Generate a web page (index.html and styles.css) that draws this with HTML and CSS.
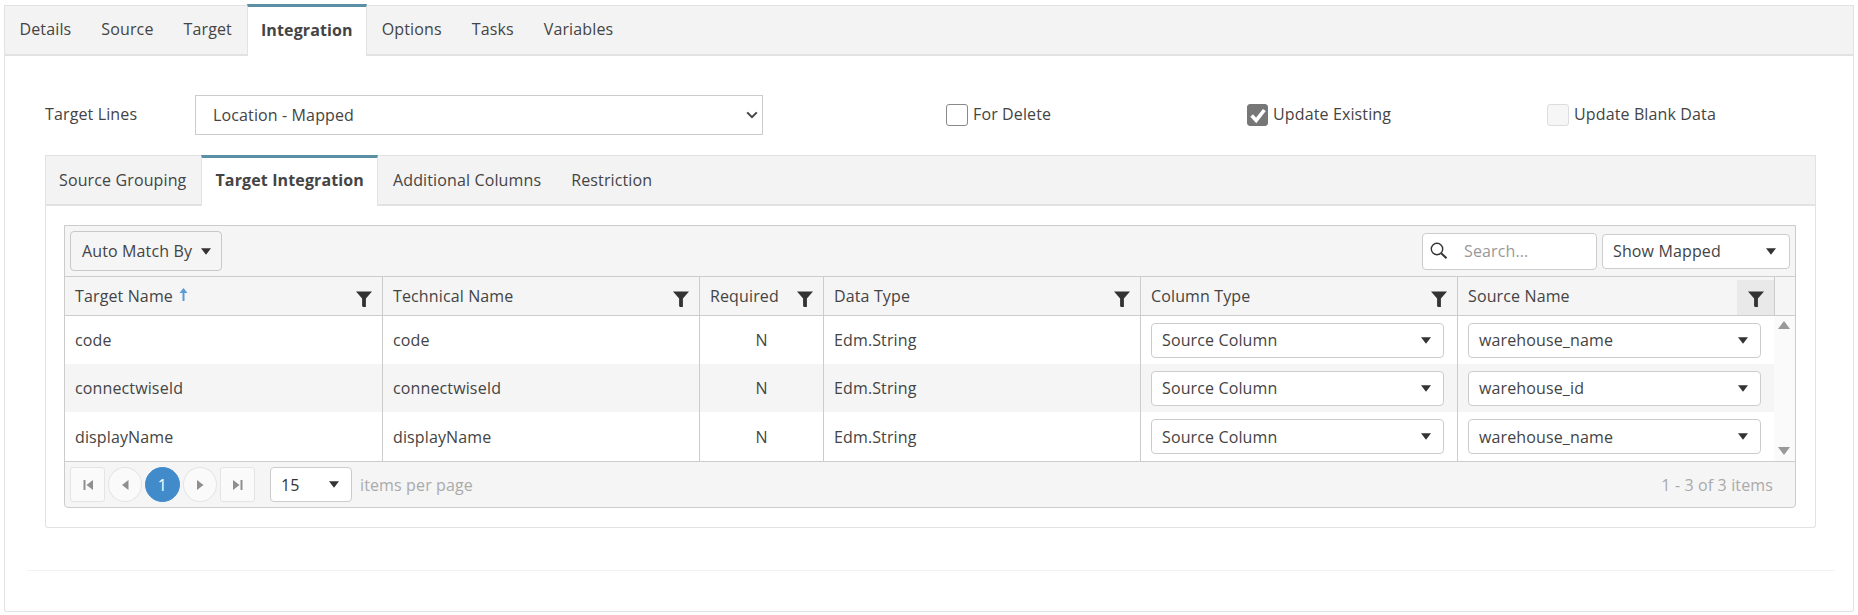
FILE: index.html
```html
<!DOCTYPE html>
<html lang="en">
<head>
<meta charset="utf-8">
<title>Integration</title>
<link rel="stylesheet" href="styles.css">
</head>
<body>
<svg class="defs" width="0" height="0">
  <symbol id="funnel" viewBox="0 0 16 16"><path d="M0 0.5h16L9.9 7.6V16H6.9L6.1 15V7.6z"/></symbol>
  <symbol id="caret" viewBox="0 0 12 8"><path d="M0 0h12L6 8z"/></symbol>
</svg>
<main class="panel">
  <nav class="tabs main-tabs">
    <a>Details</a><a>Source</a><a>Target</a><a class="active">Integration</a><a>Options</a><a>Tasks</a><a>Variables</a>
  </nav>
  <section class="body">
    <div class="form-row">
      <label class="field-label">Target Lines</label>
      <div class="native-select">
        <span>Location - Mapped</span>
        <svg class="chevron" viewBox="0 0 12 8"><path d="M1.2 1.4L6 6.2l4.8-4.8" fill="none" stroke="#444" stroke-width="2"/></svg>
      </div>
      <div class="checks">
        <label class="check check-a"><i class="box"></i>For Delete</label>
        <label class="check check-b"><i class="box on"><svg viewBox="0 0 22 22"><path d="M4 11.5l5 5.5L18 5.5" fill="none" stroke="#fff" stroke-width="4"/></svg></i>Update Existing</label>
        <label class="check check-c"><i class="box off"></i>Update Blank Data</label>
      </div>
    </div>
    <div class="inner">
      <nav class="tabs inner-tabs">
        <a>Source Grouping</a><a class="active">Target Integration</a><a>Additional Columns</a><a>Restriction</a>
      </nav>
      <div class="inner-body">
        <div class="grid">
          <div class="toolbar">
            <button class="btn">Auto Match By <svg class="caret"><use href="#caret"/></svg></button>
            <div class="tool-right">
              <div class="search">
                <svg viewBox="0 0 20 20" class="mag"><circle cx="8" cy="8" r="5.7" fill="none" stroke="#333" stroke-width="1.4"/><path d="M12.2 12.2l5.3 5.1" stroke="#333" stroke-width="2"/></svg>
                <span>Search...</span>
              </div>
              <div class="dd dd-show"><span>Show Mapped</span><svg class="caret"><use href="#caret"/></svg></div>
            </div>
          </div>
          <div class="table">
            <div class="head">
              <div class="th"><span class="th-label">Target Name<svg class="sort" viewBox="0 0 9 13"><path d="M4.5 0L8.5 5H5.5V13H3.5V5H0.5z"/></svg></span><svg class="funnel"><use href="#funnel"/></svg></div>
              <div class="th"><span>Technical Name</span><svg class="funnel"><use href="#funnel"/></svg></div>
              <div class="th"><span>Required</span><svg class="funnel"><use href="#funnel"/></svg></div>
              <div class="th"><span>Data Type</span><svg class="funnel"><use href="#funnel"/></svg></div>
              <div class="th"><span>Column Type</span><svg class="funnel"><use href="#funnel"/></svg></div>
              <div class="th filtered"><span>Source Name</span><i class="fbox"><svg class="funnel"><use href="#funnel"/></svg></i></div>
              <div class="th th-end"></div>
            </div>
            <div class="rows-wrap">
              <div class="rows">
                <div class="row">
                  <div class="td">code</div><div class="td">code</div><div class="td center">N</div><div class="td">Edm.String</div>
                  <div class="td"><div class="dd"><span>Source Column</span><svg class="caret"><use href="#caret"/></svg></div></div>
                  <div class="td"><div class="dd"><span>warehouse_name</span><svg class="caret"><use href="#caret"/></svg></div></div>
                </div>
                <div class="row alt">
                  <div class="td">connectwiseId</div><div class="td">connectwiseId</div><div class="td center">N</div><div class="td">Edm.String</div>
                  <div class="td"><div class="dd"><span>Source Column</span><svg class="caret"><use href="#caret"/></svg></div></div>
                  <div class="td"><div class="dd"><span>warehouse_id</span><svg class="caret"><use href="#caret"/></svg></div></div>
                </div>
                <div class="row">
                  <div class="td">displayName</div><div class="td">displayName</div><div class="td center">N</div><div class="td">Edm.String</div>
                  <div class="td"><div class="dd"><span>Source Column</span><svg class="caret"><use href="#caret"/></svg></div></div>
                  <div class="td"><div class="dd"><span>warehouse_name</span><svg class="caret"><use href="#caret"/></svg></div></div>
                </div>
              </div>
              <div class="scrollbar">
                <svg viewBox="0 0 12 8" class="sb"><path d="M6 0l6 8H0z"/></svg>
                <svg viewBox="0 0 12 8" class="sb"><path d="M0 0h12L6 8z"/></svg>
              </div>
            </div>
          </div>
          <div class="pager">
            <div class="pages">
              <a class="pg sq"><svg viewBox="0 0 12 12"><path d="M1.5 1h2v10h-2zM11 1v10L4.5 6z"/></svg></a>
              <a class="pg rd"><svg viewBox="0 0 12 12"><path d="M9.5 1v10L3 6z"/></svg></a>
              <a class="pg current">1</a>
              <a class="pg rd"><svg viewBox="0 0 12 12"><path d="M3 1v10l6.5-5z"/></svg></a>
              <a class="pg sq"><svg viewBox="0 0 12 12"><path d="M1 1v10l6.5-5zM8.5 1h2v10h-2z"/></svg></a>
            </div>
            <div class="dd dd-size"><span>15</span><svg class="caret"><use href="#caret"/></svg></div>
            <span class="muted per">items per page</span>
            <span class="muted total">1 - 3 of 3 items</span>
          </div>
        </div>
      </div>
    </div>
    <hr class="rule">
  </section>
</main>
</body>
</html>
```

FILE: styles.css
```css
* { box-sizing: border-box; }
html, body { margin: 0; padding: 0; background: #fff; }
body {
  width: 1858px;
  height: 615px;
  overflow: hidden;
  padding: 5px 4px 0;
  font-family: "Open Sans", "Noto Sans", sans-serif;
  font-size: 16px;
  letter-spacing: .13px;
  color: #444;
}
.defs { position: absolute; }
.panel {
  height: 607px;
  border: 1px solid #e2e2e2;
  border-top: 0;
  border-radius: 0 0 3px 3px;
}
.tabs {
  display: flex;
  height: 51px;
  background: #f3f3f3;
  border-top: 1px solid #e2e2e2;
  border-bottom: 2px solid #e2e2e2;
}
.tabs a {
  display: block;
  white-space: nowrap;
  line-height: 22px;
}
.tabs a.active {
  background: #fff;
  font-weight: 700;
  border-top: 3px solid #5b8fa3;
  border-left: 1px solid #e2e2e2;
  border-right: 1px solid #e2e2e2;
  margin-bottom: -2px;
}
.main-tabs a { padding: 12px 15px 0; }
.main-tabs a:first-child { padding-left: 14.5px; }
.main-tabs a.active { padding: 12px 13px 0; margin-top: -2px; }
.inner-tabs a { padding: 13px 15px 0; }
.inner-tabs a:first-child { padding-left: 13px; }
.inner-tabs a.active { padding: 11px 13px 0; margin-top: -1px; }
.body { padding: 39px 0 0 40px; }
.form-row {
  display: flex;
  align-items: center;
  height: 40px;
}
.field-label { width: 150px; margin-top: -2px; }
.native-select {
  width: 568px;
  height: 40px;
  border: 1px solid #ccc;
  display: flex;
  align-items: center;
  justify-content: space-between;
  padding: 0 4px 0 17px;
}
.chevron { width: 12px; height: 8px; }
.checks { position: relative; flex: 1; height: 40px; }
.check {
  position: absolute;
  top: 9px;
  display: flex;
  align-items: flex-start;
  gap: 5px;
  white-space: nowrap;
  line-height: 20px;
}
.check-a { left: 183px; }
.check-b { left: 484px; }
.check-c { left: 784px; }
.box {
  display: block;
  width: 22px;
  height: 22px;
  border: 1px solid #888;
  border-radius: 3px;
  background: #fff;
}
.box.on { background: #777; border-color: #777; width: 21px; }
.box.on svg { display: block; width: 20px; height: 20px; }
.box.off { background: #f6f6f6; border-color: #ddd; }
.inner {
  margin-top: 20px;
  width: 1771px;
  height: 373px;
  border: 1px solid #e2e2e2;
  border-top: 0;
  border-radius: 0 0 3px 3px;
}
.inner-body { padding: 19px 18px 0; }
.grid {
  width: 1732px;
  height: 283px;
  border: 1px solid #ccc;
  border-radius: 0 0 4px 4px;
  background: #f5f5f5;
}
.toolbar {
  height: 51px;
  display: flex;
  align-items: center;
  justify-content: space-between;
  padding: 0 5px 0 5px;
  background: #f5f5f5;
  border-bottom: 1px solid #ccc;
}
.btn {
  font: inherit;
  letter-spacing: inherit;
  color: inherit;
  width: 152px;
  height: 40px;
  padding: 0 0 0 11px;
  background: #f5f5f5;
  border: 1px solid #c8c8c8;
  border-radius: 4px;
  display: flex;
  align-items: center;
  gap: 9px;
}
.caret { width: 10px; height: 7px; fill: #333; flex: none; }
.tool-right { display: flex; align-items: center; gap: 5px; }
.search {
  width: 175px;
  height: 37px;
  background: #fff;
  border: 1px solid #ccc;
  border-radius: 4px;
  display: flex;
  align-items: center;
  padding-left: 6px;
  gap: 15px;
  color: #999;
}
.mag { width: 20px; height: 20px; }
.dd {
  background: #fff;
  border: 1px solid #ccc;
  border-radius: 4px;
  height: 35px;
  display: flex;
  align-items: center;
  justify-content: space-between;
  padding: 0 13px 0 10px;
  color: #444;
}
.dd-show { width: 188px; }
.head {
  display: grid;
  grid-template-columns: 317px 317px 124px 317px 317px 317px 1fr;
  height: 39px;
  border-bottom: 1px solid #ccc;
}
.row {
  display: grid;
  grid-template-columns: 317px 317px 124px 317px 317px 317px;
}
.th {
  display: flex;
  align-items: center;
  justify-content: space-between;
  padding: 0 10px;
  border-left: 1px solid #ccc;
}
.th:first-child, .td:first-child { border-left: 0; }
.th-end { padding: 0; }
.th-label { display: flex; align-items: center; gap: 6px; }
.sort { width: 9px; height: 13px; fill: #5b9bd5; margin-top: -3px; }
.funnel { width: 16px; height: 16px; fill: #333; margin-top: 5px; flex: none; }
.filtered { padding-right: 0; }
.fbox {
  width: 37px;
  height: 35px;
  align-self: flex-end;
  background: #e9e9e9;
  display: flex;
  align-items: center;
  justify-content: center;
}
.fbox .funnel { margin-top: 2px; }
.rows-wrap {
  display: flex;
  height: 146px;
  border-bottom: 1px solid #ccc;
  background: #fff;
}
.rows { width: 1709px; }
.row { height: 48px; background: #fff; }
.row:last-child { height: 49px; }
.row.alt { background: #f5f5f5; }
.td {
  display: flex;
  align-items: center;
  padding-left: 10px;
  padding-right: 13px;
  border-left: 1px solid #ccc;
}
.td .dd { width: 100%; padding: 0 12px 0 10px; }
.center { justify-content: center; padding: 0; }
.scrollbar {
  flex: 1;
  background: #fafafa;
  display: flex;
  flex-direction: column;
  justify-content: space-between;
  align-items: center;
  padding: 5px 2px 6px 0;
}
.sb { width: 12px; height: 8px; fill: #999; }
.pager {
  height: 45px;
  display: flex;
  align-items: center;
  padding: 0 22px 0 5px;
}
.pages { display: flex; gap: 3px; }
.pg {
  width: 35px;
  height: 35px;
  border: 1px solid #e4e4e4;
  background: #fafafa;
  display: flex;
  align-items: center;
  justify-content: center;
}
.pg svg { width: 12px; height: 12px; fill: #8f8f8f; }
.sq { border-radius: 3px; }
.rd { width: 34px; border-radius: 50%; }
.current { background: #428bca; border-color: #428bca; color: #fff; border-radius: 50%; }
.dd-size { width: 82px; margin-left: 15px; padding: 0 12px 0 10px; color: #333; }
.muted { color: #aaa; }
.per { margin-left: 8px; }
.total { margin-left: auto; }
.rule {
  margin: 42px 18px 0 -18px;
  border: 0;
  border-top: 1px solid #f1f1f1;
}
```
